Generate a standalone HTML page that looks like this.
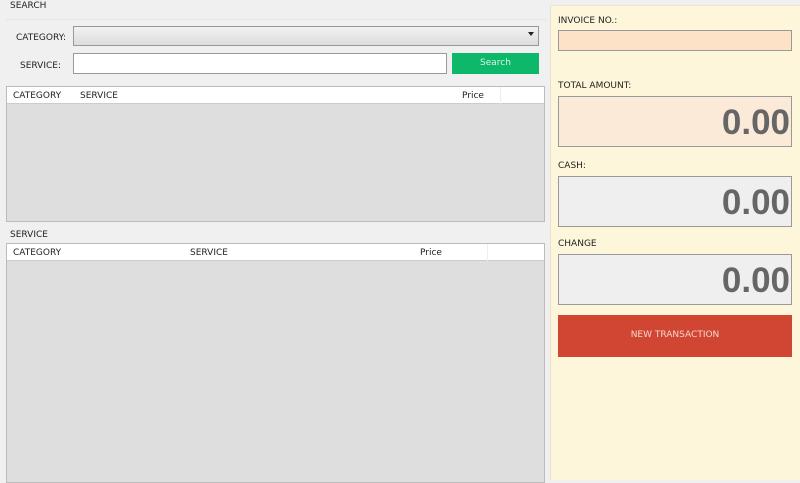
<html><head><style>
body{margin:0;width:800px;height:480px;background:#f0f0f0;font-family:"DejaVu Sans","Liberation Sans",sans-serif;font-size:9px;color:#222;position:relative;overflow:hidden}
div{position:absolute;box-sizing:border-box}
.l{white-space:nowrap}
.num{right:1px;font:bold 35px "Liberation Sans",sans-serif;color:#666;top:6px}
</style></head><body>
<div class="l" style="left:10px;top:1px">SEARCH</div>
<div style="left:6px;top:19px;width:540px;height:1px;background:#e4e4e4"></div>
<div class="l" style="left:16px;top:33px">CATEGORY:</div>
<div style="left:73px;top:26px;width:466px;height:20px;border:1px solid #999;background:linear-gradient(#f2f2f2,#dcdcdc)"><div style="right:4px;top:5px;width:0;height:0;border-left:3px solid transparent;border-right:3px solid transparent;border-top:4px solid #222"></div></div>
<div class="l" style="left:20px;top:61px">SERVICE:</div>
<div style="left:73px;top:53px;width:374px;height:21px;border:1px solid #999;background:#fff"></div>
<div style="left:452px;top:53px;width:87px;height:21px;background:#0db86a;color:#d8f5e6;text-align:center;line-height:20px">Search</div>
<div style="left:6px;top:86px;width:539px;height:136px;border:1px solid #bbb;background:#dedede">
<div style="left:0;top:0;width:537px;height:17px;background:#fff;border-bottom:1px solid #ccc"></div>
<div class="l" style="left:6px;top:4px">CATEGORY</div><div class="l" style="left:73px;top:4px">SERVICE</div><div class="l" style="left:455px;top:4px">Price</div>
<div style="left:493px;top:0;width:1px;height:17px;background:#eee"></div>
</div>
<div class="l" style="left:10px;top:230px">SERVICE</div>
<div style="left:6px;top:243px;width:539px;height:240px;border:1px solid #bbb;background:#dedede">
<div style="left:0;top:0;width:537px;height:17px;background:#fff;border-bottom:1px solid #ccc"></div>
<div class="l" style="left:6px;top:4px">CATEGORY</div><div class="l" style="left:183px;top:4px">SERVICE</div><div class="l" style="left:413px;top:4px">Price</div>
<div style="left:480px;top:0;width:1px;height:17px;background:#eee"></div>
</div>
<div style="left:550px;top:5px;width:250px;height:475px;background:#fdf6da;border-left:1px solid #e8e2cc;border-top:1px solid #ece6d0"></div>
<div class="l" style="left:558px;top:16px">INVOICE NO.:</div>
<div style="left:558px;top:30px;width:234px;height:21px;border:1px solid #999;background:#fde2c7"></div>
<div class="l" style="left:558px;top:81px">TOTAL AMOUNT:</div>
<div style="left:558px;top:96px;width:234px;height:51px;border:1px solid #999;background:#fbead8"><div class="num">0.00</div></div>
<div class="l" style="left:558px;top:161px">CASH:</div>
<div style="left:558px;top:176px;width:234px;height:51px;border:1px solid #999;background:#efefef"><div class="num">0.00</div></div>
<div class="l" style="left:558px;top:239px">CHANGE</div>
<div style="left:558px;top:254px;width:234px;height:51px;border:1px solid #999;background:#efefef"><div class="num">0.00</div></div>
<div style="left:558px;top:315px;width:234px;height:42px;background:#d04632;color:#f6d6cf;text-align:center;line-height:41px">NEW TRANSACTION</div>
</body></html>
